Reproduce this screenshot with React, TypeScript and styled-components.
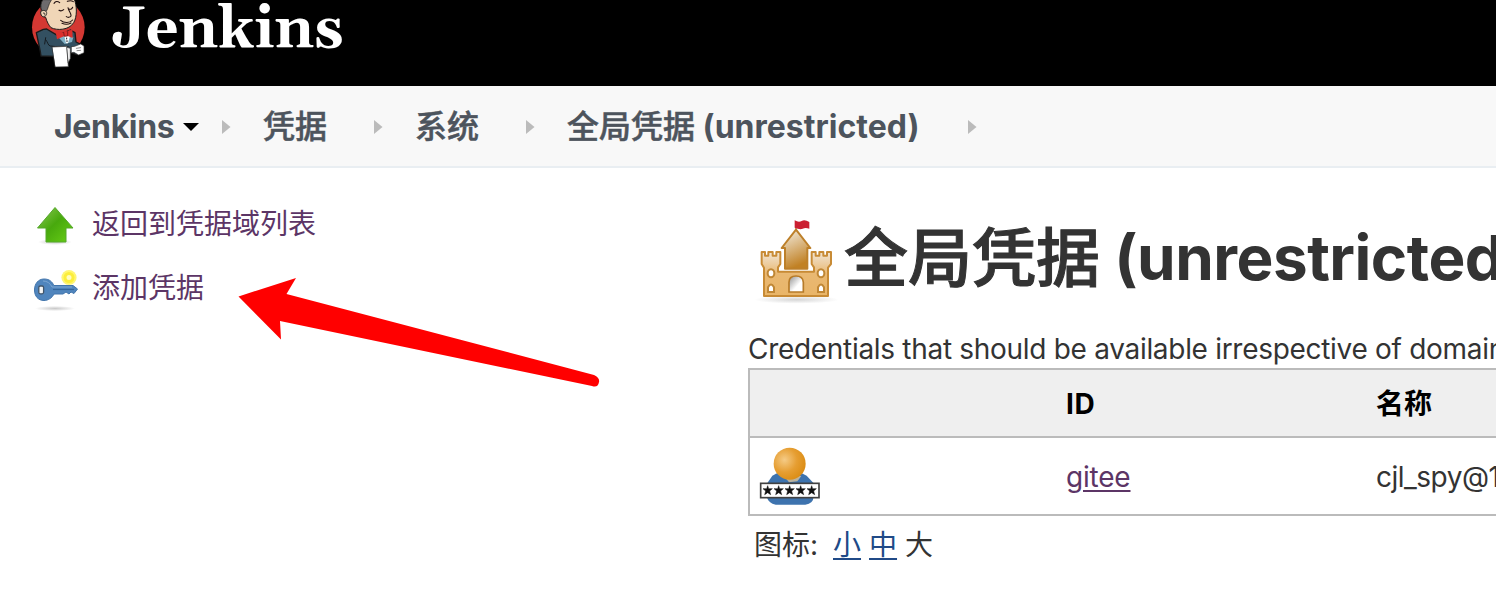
import React from "react";
import styled, { createGlobalStyle } from "styled-components";

const GlobalStyle = createGlobalStyle`
  * { box-sizing: border-box; }
  html, body { margin: 0; padding: 0; background: #fff; overflow: hidden; }
  body {
    font-family: Inter, "Noto Sans CJK SC", sans-serif;
    font-size: 28px;
    color: #333;
  }
`;

const Page = styled.div`
  position: relative;
  width: 1496px;
  height: 612px;
  overflow: hidden;
  background: #fff;
`;

const Header = styled.header`
  display: flex;
  height: 86px;
  padding-left: 20px;
  background: #000;
`;

const Breadcrumbs = styled.nav`
  display: flex;
  align-items: center;
  height: 82px;
  padding: 2px 0 0 54px;
  background: #f8f8f8;
  border-bottom: 2px solid #e9eef2;
`;

const Crumb = styled.a<{ $width: number }>`
  display: flex;
  align-items: center;
  flex: none;
  width: ${(p) => p.$width}px;
  height: 78px;
  color: #4d545d;
  font-size: 32px;
  font-weight: 500;
  line-height: 48px;
  white-space: pre;
  -webkit-text-stroke: 0.5px #4d545d;
`;

const Latin = styled.span<{ $spacing?: number; $size?: number; $bold?: boolean; $lift?: number }>`
  letter-spacing: ${(p) => p.$spacing ?? 0}px;
  margin-bottom: ${(p) => p.$lift ?? 0}px;
  -webkit-text-stroke: 0;
  ${(p) => (p.$size ? `font-size: ${p.$size}px;` : "")}
  ${(p) => (p.$bold ? "font-weight: 700;" : "")}
`;

const Separator = styled.svg<{ $after: number }>`
  flex: none;
  width: 10px;
  height: 16px;
  margin-right: ${(p) => p.$after}px;
`;

const Caret = styled.svg`
  width: 16px;
  height: 10px;
  margin-left: 9px;
`;

const Columns = styled.div`
  display: flex;
`;

const SidePanel = styled.aside`
  flex: none;
  width: 748px;
  padding: 24px 0 0 32px;
`;

const Task = styled.a`
  display: flex;
  align-items: center;
  height: 64px;
  gap: 12px;
  color: #5c3566;
  line-height: 40px;
`;

const TaskIcon = styled.svg`
  flex: none;
  width: 48px;
  height: 48px;
`;

const Main = styled.main`
  flex: none;
  width: 900px;
`;

const Title = styled.h1`
  display: flex;
  align-items: center;
  height: 160px;
  margin: 0;
  padding-top: 20px;
  color: #333;
  font-size: 64px;
  font-weight: 500;
  line-height: 96px;
  white-space: pre;
  -webkit-text-stroke: 1px #333;
`;

const TitleIcon = styled.svg`
  flex: none;
  width: 100px;
  height: 105px;
  margin: 0 -1px 0 -3px;
`;

const Description = styled.div`
  height: 40px;
  padding-top: 1px;
  line-height: 40px;
  white-space: nowrap;
`;

const Table = styled.div`
  border: 2px solid #bbb;
`;

const Row = styled.div<{ $head?: boolean }>`
  display: grid;
  grid-template-columns: 316px 310px 1fr;
  align-items: center;
  height: ${(p) => (p.$head ? 68 : 76)}px;
  background: ${(p) => (p.$head ? "#efefef" : "#fff")};
  border-bottom: ${(p) => (p.$head ? "2px solid #bbb" : "0")};
  color: ${(p) => (p.$head ? "#000" : "#333")};
  font-weight: ${(p) => (p.$head ? 700 : 400)};
  line-height: 40px;
`;

const Cell = styled.div<{ $spacing?: number }>`
  padding-top: 2px;
  letter-spacing: ${(p) => p.$spacing ?? 0}px;
`;

const UserIcon = styled.svg`
  display: block;
  width: 80px;
  height: 76px;
`;

const CredentialLink = styled.a`
  color: #5c3566;
  text-decoration: underline;
  text-decoration-thickness: 2px;
  text-underline-offset: 3px;
`;

const IconSizes = styled.div`
  display: flex;
  gap: 8px;
  padding: 9px 0 0 6px;
  line-height: 40px;
`;

const SizeLabel = styled.span`
  width: 71px;
`;

const SizeLink = styled(CredentialLink)`
  color: #204a87;
  text-decoration-skip-ink: none;
`;

const Arrow = styled.svg`
  position: absolute;
  left: 225px;
  top: 265px;
  width: 390px;
  height: 135px;
`;

const Chevron = ({ after }: { after: number }) => (
  <Separator $after={after} viewBox="0 0 10 16">
    <path d="M1 1L9.5 8L1 15Z" fill="#bbb" />
  </Separator>
);

const JenkinsLogo = () => (
  <svg width="340" height="86" viewBox="0 0 340 86">
    <g transform="scale(.33333)" strokeLinejoin="round" strokeLinecap="round">
      <ellipse cx="115" cy="82" rx="79" ry="83" fill="#d33833" />
      <path d="M49 98L70 88L80 87L112 106L151 90L165 98L168 126L184 134L188 156L171 164L151 157L151 171L63 168L61 155Z" fill="#335061" stroke="#1a1a1a" strokeWidth="4" />
      <path d="M68 0C63 9 61 20 64 31C61 34 61 46 67 49L77 52C80 64 87 77 93 83C111 92 147 91 161 68C172 50 171 17 163-2Z" fill="#f0d6b7" stroke="#1a1a1a" strokeWidth="3" />
      <path d="M68 0C62 10 61 20 65 31L78 35C85 27 84 15 94 0Z" fill="#6d6b6d" stroke="#1a1a1a" strokeWidth="2" />
      <path d="M64 34C69 29 78 31 80 38C81 45 75 52 69 50M70 39C74 38 77 41 74 45" fill="#f0d6b7" stroke="#1a1a1a" strokeWidth="2.5" />
      <path d="M102 10Q109 0 119 8M142 4Q153 0 160 5M117 31Q124 35 131 29M145 26Q154 31 158 22M144 23C146 34 154 39 153 48C150 53 143 53 139 50M122 61C132 70 150 70 158 60M126 70Q140 76 153 69" fill="none" stroke="#211" strokeWidth="3.2" />
      <path d="M115 112L134 132L156 126L160 112L143 103Z" fill="#81b0c4" />
      <path d="M133 108L150 108L144 130L138 130Z" fill="#fff" />
      <path d="M106 91L129 98L133 93L143 94L147 91L157 90L158 114L143 108L132 109L111 118Z" fill="#dc302d" />
      <path d="M131 97L133 109L143 108L143 95" fill="none" stroke="#731819" strokeWidth="2.5" />
      <path d="M140 114v3M141 122v3M77 119C84 127 84 137 91 138C110 142 132 136 147 141M77 113L74 132" fill="none" stroke="#151b20" strokeWidth="3" />
      <path d="M97 141L141 139L145 200L106 201Z" fill="#fff" stroke="#333" strokeWidth="2" />
      <path d="M141 142L151 145L151 175L145 188Z" fill="#f2f2f2" stroke="#333" strokeWidth="2" />
      <path d="M164 139L182 132L192 138L192 158L176 165L162 157L154 158L154 141Z" fill="#fff" stroke="#333" strokeWidth="2" />
      <path d="M169 145L182 143M171 152L182 151" stroke="#555" strokeWidth="2" />
    </g>
    <text x="91.5" y="47" fill="#fff" fontFamily='Gelasio, Georgia, "Liberation Serif", serif' fontWeight="700" fontSize="58" textLength="232" lengthAdjust="spacingAndGlyphs">Jenkins</text>
  </svg>
);

const UpIcon = () => (
  <TaskIcon viewBox="0 0 48 48">
    <defs>
      <linearGradient id="upFill" x1="0" y1="0" x2="1" y2="1">
        <stop stopColor="#8cc957" />
        <stop offset=".48" stopColor="#48a90d" />
        <stop offset="1" stopColor="#69cf16" />
      </linearGradient>
      <radialGradient id="softShadow">
        <stop stopColor="#777" stopOpacity=".4" />
        <stop offset="1" stopColor="#777" stopOpacity="0" />
      </radialGradient>
    </defs>
    <ellipse cx="23" cy="42" rx="17" ry="3" fill="url(#softShadow)" />
    <path d="M23 7.5L41 28H34V42H14V28H5.5Z" fill="url(#upFill)" stroke="#55a82b" strokeWidth="1" strokeLinejoin="round" />
  </TaskIcon>
);

const KeyIcon = () => (
  <TaskIcon viewBox="0 0 48 48">
    <ellipse cx="23" cy="44.5" rx="20" ry="2.6" fill="url(#softShadow)" />
    <circle cx="37" cy="13.5" r="7.6" fill="#fff450" opacity=".8" />
    <circle cx="37" cy="13.5" r="4" fill="#fffcc0" stroke="#fcee3c" strokeWidth="3" />
    <path d="M12 15C18 15 20 18 22 21.5H41L45.5 25L42 29.5L39 28L37 30L34 28L31 30H22C20 34 16 36.5 12 36.5C6 36.5 2.5 32 2.5 26S6 15 12 15Z" fill="#5085bd" stroke="#4275ac" strokeWidth="1" />
    <path d="M11 17Q17 17 20 23H40" fill="none" stroke="#7da6d2" strokeWidth="1" />
    <path d="M21 25.5H42" stroke="#34669d" strokeWidth="1.2" />
    <rect x="6.8" y="22" width="4.8" height="7.8" rx="1.5" fill="#f4f4f4" stroke="#42566b" strokeWidth="1.3" />
  </TaskIcon>
);

const CastleIcon = () => (
  <TitleIcon viewBox="0 0 300 315">
    <defs>
      <linearGradient id="tower" x1="0" y1="0" x2=".35" y2="1">
        <stop stopColor="#f5f1e8" />
        <stop offset="1" stopColor="#c18124" />
      </linearGradient>
      <linearGradient id="wall" x1="0" y1="0" x2="0" y2="1">
        <stop stopColor="#f1e5d4" />
        <stop offset=".5" stopColor="#e9b872" />
        <stop offset="1" stopColor="#e9b568" />
      </linearGradient>
      <linearGradient id="gate" x1="0" y1="0" x2="1" y2="1">
        <stop offset=".15" stopColor="#aaa" />
        <stop offset=".6" stopColor="#fff" />
      </linearGradient>
      <radialGradient id="castleShadow">
        <stop stopColor="#777" stopOpacity=".3" />
        <stop offset="1" stopColor="#777" stopOpacity="0" />
      </radialGradient>
    </defs>
    <ellipse cx="155" cy="281" rx="127" ry="12" fill="url(#castleShadow)" />
    <path d="M153 70V48" stroke="#94703b" strokeWidth="4" />
    <path d="M149 43Q161 50 170 45T193 48V68Q181 64 173 68T149 65Z" fill="#cb1e31" />
    <path d="M153 71L196 126H187V188H120V126H110Z" fill="url(#tower)" stroke="#bd802a" strokeWidth="6" strokeLinejoin="round" />
    <path d="M50 138H60V149H70V138H83V149H94V138H106V174L99 184V197H207V184L200 174V138H212V149H223V138H235V149H246V138H258V174L249 185V270H57V185L50 174Z" fill="url(#wall)" stroke="#c88b35" strokeWidth="6" strokeLinejoin="round" />
    <path d="M132 258V229Q132 210 153 210T175 229V258Z" fill="url(#gate)" stroke="#b77b28" strokeWidth="5" />
    {[78, 228].map((x) => (
      <g key={x} fill="#fff" stroke="#c08735" strokeWidth="6">
        <ellipse cx={x} cy="202" rx="10" ry="12" />
        <path d={`M${x - 9} 258V244Q${x} 227 ${x + 9} 244V258Z`} />
      </g>
    ))}
  </TitleIcon>
);

const CredentialIcon = () => (
  <UserIcon viewBox="0 0 240 228">
    <defs>
      <radialGradient id="head" cx=".34" cy=".38" r=".7">
        <stop stopColor="#f5cb86" />
        <stop offset=".55" stopColor="#e69e32" />
        <stop offset="1" stopColor="#db8c13" />
      </radialGradient>
    </defs>
    <path d="M67 113Q117 82 170 113L191 136V175Q190 198 166 200H77Q56 196 50 176V138Z" fill="#3d73ae" />
    <path d="M102 114L117 133L142 130L154 114Z" fill="#bbb39e" />
    <circle cx="119" cy="77" r="48" fill="url(#head)" />
    <rect x="32" y="136" width="175" height="43" fill="#fff" stroke="#414141" strokeWidth="5" />
    {[53, 86, 119, 152, 185].map((x) => (
      <path key={x} transform={`translate(${x} 157)`} d="M0-14L3-5L14-5L6 2L9 13L0 7L-9 13L-6 2L-14-5L-3-5Z" fill="#111" stroke="#111" strokeWidth="1.5" />
    ))}
  </UserIcon>
);

export default function App() {
  return (
    <Page>
      <GlobalStyle />
      <Header><JenkinsLogo /></Header>
      <Breadcrumbs>
        <Crumb $width={167}>
          <Latin $bold $spacing={-0.35}>Jenkins</Latin>
          <Caret viewBox="0 0 16 10"><path d="M0 1H16L8 9Z" fill="#000" /></Caret>
        </Crumb>
        <Chevron after={32} />
        <Crumb $width={110}>凭据</Crumb>
        <Chevron after={32} />
        <Crumb $width={110}>系统</Crumb>
        <Chevron after={32} />
        <Crumb $width={400}>全局凭据<Latin $bold> (unrestricted)</Latin></Crumb>
        <Chevron after={0} />
      </Breadcrumbs>
      <Columns>
        <SidePanel>
          <Task><UpIcon />返回到凭据域列表</Task>
          <Task><KeyIcon />添加凭据</Task>
        </SidePanel>
        <Main>
          <Title><CastleIcon />全局凭据<Latin $bold $size={62} $spacing={-0.5} $lift={1}> (unrestricted)</Latin></Title>
          <Description><Latin $spacing={-0.3}>Credentials that should be available irrespective of domain</Latin></Description>
          <Table>
            <Row $head><Cell /><Cell $spacing={0.6}>ID</Cell><Cell>名称</Cell></Row>
            <Row>
              <CredentialIcon />
              <Cell $spacing={-0.2}><CredentialLink>gitee</CredentialLink></Cell>
              <Cell $spacing={-0.5}>cjl_spy@1</Cell>
            </Row>
          </Table>
          <IconSizes>
            <SizeLabel>图标:</SizeLabel>
            <SizeLink>小</SizeLink>
            <SizeLink>中</SizeLink>
            <span>大</span>
          </IconSizes>
        </Main>
      </Columns>
      <Arrow viewBox="0 0 390 135">
        <path d="M13.5 31.5L71 13L61.5 29L369 110Q375 113 374 117Q373 123 367 121L55 56L56 74.5Z" fill="#f00" />
      </Arrow>
    </Page>
  );
}
